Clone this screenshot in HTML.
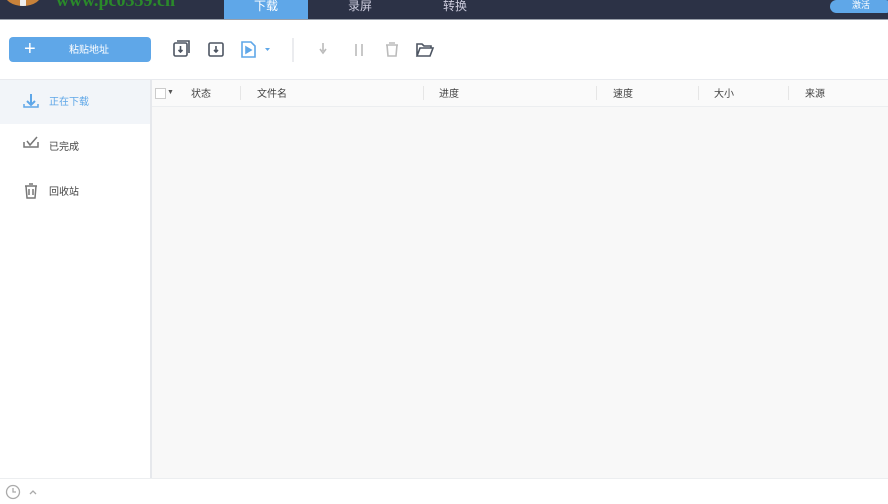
<!DOCTYPE html><html><head><style>
body{margin:0;width:888px;height:504px;overflow:hidden;font-family:"Liberation Sans","Noto Sans CJK SC",sans-serif;font-size:10px;line-height:12px;color:#444;position:relative;background:#fff}
.a{position:absolute}
</style></head><body>
<div class="a" style="left:0;top:0;width:888px;height:19px;background:#2c3246"></div>
<div class="a" style="left:0;top:19px;width:888px;height:1px;background:#9aa0aa"></div>
<div class="a" style="left:4px;top:-20px;width:38px;height:26px;border-radius:50%;background:#c8823a;overflow:hidden"><div style="margin-left:16px;width:6px;height:26px;background:#eee"></div></div>
<div class="a" style="left:56px;top:-10px;color:#2a8a2a;font-family:'Liberation Serif',serif;font-size:18px;line-height:20px;font-weight:bold">www.pc0359.cn</div>
<div class="a" style="left:224px;top:0;width:84px;height:19px;background:#5fa7e8;color:#fff;text-align:center;font-size:12px;line-height:12px">下载</div>
<div class="a" style="left:348px;top:0;color:#ccd;font-size:12px;line-height:12px">录屏</div>
<div class="a" style="left:443px;top:0;color:#ccd;font-size:12px;line-height:12px">转换</div>
<div class="a" style="left:830px;top:0;width:62px;height:13px;border-radius:7px;background:#5fa7e8;color:#fff;font-size:9px;text-align:center;line-height:10px">激活</div>
<div class="a" style="left:9px;top:37px;width:142px;height:25px;border-radius:4px;background:#5fa7e8;color:#fff"><span style="position:absolute;left:15px;top:0;font-size:20px;line-height:24px">+</span><span style="position:absolute;left:60px;top:8px;font-size:10px;line-height:12px">粘贴地址</span></div>
<svg class="a" style="left:170px;top:38px" width="270" height="24" fill="none" stroke-width="1.6">
<g stroke="#4d5562"><rect x="4" y="5" width="13" height="13" rx="1.5"/><path d="M7 3h12v12"/><path d="M10.5 8v6M8.5 12l2 2 2-2"/></g>
<g stroke="#4d5562"><rect x="39" y="5" width="14" height="13" rx="1.5"/><path d="M46 8v6M44 12l2 2 2-2"/></g>
<g stroke="#5fa7e8"><path d="M72 4h9l4 4v11H72z"/><path d="M76 9l5 3-5 3z" fill="#5fa7e8"/></g>
<path d="M95 10h5l-2.5 3z" fill="#5fa7e8"/>
<path d="M123 0v44" stroke="#e6e8eb"/>
<g stroke="#bbb"><path d="M153 5v8M150 11l3 4 3-4"/><path d="M186 6v12M192 6v12"/><path d="M216 7h12M217 7l1 11h8l1-11M219 5h6"/></g>
<g stroke="#4d5562"><path d="M247 18V6h5l2 2h7v2M247 18l3-8h13l-3 8z"/></g>
</svg>
<div class="a" style="left:0;top:79px;width:888px;height:1px;background:#e8eaee"></div>
<div class="a" style="left:0;top:80px;width:151px;height:44px;background:#f2f5f9"></div>
<div class="a" style="left:150px;top:80px;width:2px;height:398px;background:#e6e8ec"></div>
<div class="a" style="left:152px;top:80px;width:736px;height:398px;background:#f8f8f8"></div>
<div class="a" style="left:152px;top:80px;width:736px;height:26px;background:#fafafa"></div>
<div class="a" style="left:152px;top:106px;width:736px;height:1px;background:#eceef0"></div>
<div class="a" style="left:155px;top:88px;width:9px;height:9px;border:1px solid #ccc;background:#fff"></div>
<div class="a" style="left:167px;top:88px;font-size:7px;line-height:9px;color:#555">▼</div>
<div class="a" style="left:191px;top:89px">状态</div>
<div class="a" style="left:240px;top:86px;width:1px;height:14px;background:#e6e6e6"></div>
<div class="a" style="left:257px;top:89px">文件名</div>
<div class="a" style="left:423px;top:86px;width:1px;height:14px;background:#e6e6e6"></div>
<div class="a" style="left:439px;top:89px">进度</div>
<div class="a" style="left:596px;top:86px;width:1px;height:14px;background:#e6e6e6"></div>
<div class="a" style="left:613px;top:89px">速度</div>
<div class="a" style="left:698px;top:86px;width:1px;height:14px;background:#e6e6e6"></div>
<div class="a" style="left:714px;top:89px">大小</div>
<div class="a" style="left:788px;top:86px;width:1px;height:14px;background:#e6e6e6"></div>
<div class="a" style="left:805px;top:89px">来源</div>
<svg class="a" style="left:20px;top:92px" width="22" height="120" fill="none" stroke-width="1.5">
<path d="M11 2v11M7 9l4 4 4-4" stroke="#5fa7e8" stroke-width="2"/><path d="M4 12v3h14v-3" stroke="#5fa7e8"/>
<path d="M4 50v5h14v-5M7 49l3 4 7-8" stroke="#777"/>
<path d="M5 94h12M6 94l1 12h8l1-12M9 92h4M9 97v6M13 97v6" stroke="#777"/>
</svg>
<div class="a" style="left:49px;top:97px;color:#5fa7e8">正在下载</div>
<div class="a" style="left:49px;top:142px">已完成</div>
<div class="a" style="left:49px;top:187px">回收站</div>
<div class="a" style="left:0;top:478px;width:888px;height:1px;background:#eceef0"></div>
<svg class="a" style="left:4px;top:484px" width="36" height="16" fill="none" stroke="#aaa" stroke-width="1.3"><circle cx="9" cy="8" r="6.5"/><path d="M9 4v4h3"/><path d="M26 10l3-3 3 3"/></svg>
</body></html>
